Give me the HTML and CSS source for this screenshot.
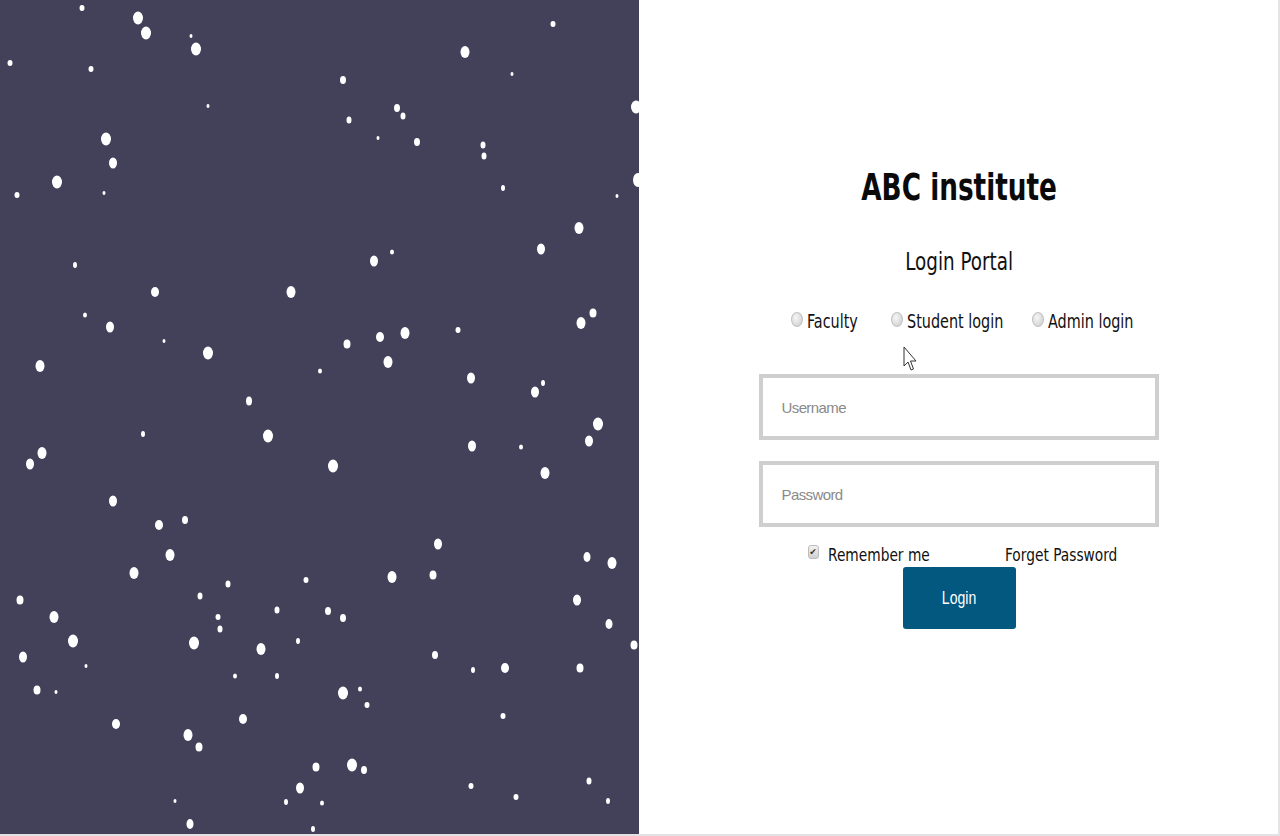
FILE: index.html
```html
<!DOCTYPE html>
<html>
<head>
<meta charset="utf-8">
<title>ABC institute - Login</title>
<link rel="stylesheet" href="styles.css">
</head>
<body>
<div class="page">
  <div class="snow-panel">
    <svg class="snow" viewBox="0 0 639 836" width="639" height="836" fill="#ffffff">
      <g class="big">
        <ellipse cx="138" cy="18" rx="5" ry="6.5"/><ellipse cx="146" cy="33" rx="5" ry="6.5"/><ellipse cx="196" cy="49" rx="5" ry="6.5"/>
        <ellipse cx="465" cy="52" rx="4.5" ry="6"/><ellipse cx="106" cy="139" rx="5" ry="6.5"/><ellipse cx="113" cy="163" rx="4" ry="5.5"/>
        <ellipse cx="57" cy="182" rx="5" ry="6.5"/><ellipse cx="636" cy="107" rx="5" ry="6.5"/><ellipse cx="638" cy="180" rx="5" ry="7"/>
        <ellipse cx="579" cy="228" rx="4.5" ry="6"/><ellipse cx="541" cy="249" rx="4" ry="5.5"/><ellipse cx="374" cy="261" rx="4" ry="5.5"/>
        <ellipse cx="291" cy="292" rx="4.5" ry="6"/><ellipse cx="155" cy="292" rx="4" ry="5"/><ellipse cx="110" cy="327" rx="4" ry="5.5"/>
        <ellipse cx="208" cy="353" rx="5" ry="6.5"/><ellipse cx="405" cy="333" rx="4.5" ry="6"/><ellipse cx="380" cy="337" rx="4" ry="5"/>
        <ellipse cx="388" cy="362" rx="4.5" ry="6"/><ellipse cx="347" cy="344" rx="3.5" ry="4.5"/><ellipse cx="581" cy="323" rx="4.5" ry="6"/>
        <ellipse cx="593" cy="313" rx="3.5" ry="4.5"/><ellipse cx="40" cy="366" rx="4.5" ry="6"/><ellipse cx="471" cy="378" rx="4" ry="5.5"/>
        <ellipse cx="535" cy="392" rx="4" ry="5.5"/><ellipse cx="598" cy="424" rx="5" ry="6.5"/><ellipse cx="589" cy="441" rx="4" ry="5.5"/>
        <ellipse cx="268" cy="436" rx="5" ry="6.5"/><ellipse cx="42" cy="453" rx="4.5" ry="6"/><ellipse cx="30" cy="464" rx="4" ry="5.5"/>
        <ellipse cx="333" cy="466" rx="5" ry="6.5"/><ellipse cx="472" cy="446" rx="4" ry="5.5"/><ellipse cx="545" cy="473" rx="4.5" ry="6"/>
        <ellipse cx="113" cy="501" rx="4" ry="5.5"/><ellipse cx="159" cy="525" rx="4" ry="5"/><ellipse cx="185" cy="520" rx="3" ry="4"/>
        <ellipse cx="438" cy="544" rx="4" ry="5.5"/><ellipse cx="170" cy="555" rx="4.5" ry="6"/><ellipse cx="134" cy="573" rx="4.5" ry="6"/>
        <ellipse cx="392" cy="577" rx="4.5" ry="6"/><ellipse cx="433" cy="575" rx="3.5" ry="4.5"/><ellipse cx="587" cy="557" rx="3.5" ry="5"/>
        <ellipse cx="612" cy="563" rx="4.5" ry="6"/><ellipse cx="577" cy="600" rx="4" ry="5.5"/><ellipse cx="54" cy="617" rx="4.5" ry="6"/>
        <ellipse cx="73" cy="641" rx="5" ry="6.5"/><ellipse cx="194" cy="643" rx="5" ry="6.5"/><ellipse cx="261" cy="649" rx="4.5" ry="6"/>
        <ellipse cx="20" cy="600" rx="3.5" ry="4.5"/><ellipse cx="609" cy="624" rx="3.5" ry="5"/><ellipse cx="634" cy="645" rx="3.5" ry="4.5"/>
        <ellipse cx="23" cy="657" rx="4" ry="5.5"/><ellipse cx="343" cy="693" rx="5" ry="6.5"/><ellipse cx="352" cy="765" rx="5" ry="6.5"/>
        <ellipse cx="188" cy="735" rx="4.5" ry="6"/><ellipse cx="199" cy="747" rx="3.5" ry="4.5"/><ellipse cx="190" cy="824" rx="3.5" ry="5"/>
        <ellipse cx="300" cy="788" rx="4" ry="5.5"/><ellipse cx="316" cy="767" rx="3.5" ry="4.5"/><ellipse cx="505" cy="668" rx="4" ry="5"/>
        <ellipse cx="116" cy="724" rx="4" ry="5"/><ellipse cx="243" cy="719" rx="4" ry="5"/><ellipse cx="37" cy="690" rx="3.5" ry="4.5"/>
        <ellipse cx="580" cy="668" rx="3.5" ry="4.5"/><ellipse cx="435" cy="655" rx="3" ry="4"/>
      </g>
      <g class="small">
        <ellipse cx="82" cy="8" rx="2.5" ry="3"/><ellipse cx="10" cy="63" rx="2.5" ry="3"/><ellipse cx="91" cy="69" rx="2.5" ry="3"/>
        <ellipse cx="343" cy="80" rx="3" ry="4"/><ellipse cx="349" cy="120" rx="2.5" ry="3.5"/><ellipse cx="397" cy="108" rx="3" ry="4"/>
        <ellipse cx="403" cy="116" rx="2.5" ry="3.5"/><ellipse cx="417" cy="142" rx="3" ry="4"/><ellipse cx="483" cy="145" rx="2.5" ry="3.5"/>
        <ellipse cx="484" cy="156" rx="2.5" ry="3.5"/><ellipse cx="503" cy="188" rx="2" ry="3"/><ellipse cx="75" cy="265" rx="2" ry="3"/>
        <ellipse cx="392" cy="252" rx="2" ry="2.5"/><ellipse cx="17" cy="195" rx="2.5" ry="3"/><ellipse cx="553" cy="24" rx="2.5" ry="3"/>
        <ellipse cx="143" cy="434" rx="2" ry="3"/><ellipse cx="249" cy="401" rx="3" ry="4.5"/><ellipse cx="458" cy="330" rx="2.5" ry="3"/>
        <ellipse cx="543" cy="383" rx="2" ry="3"/><ellipse cx="320" cy="371" rx="2" ry="2.5"/><ellipse cx="228" cy="584" rx="2.5" ry="3.5"/>
        <ellipse cx="200" cy="596" rx="2.5" ry="3.5"/><ellipse cx="277" cy="610" rx="2.5" ry="3.5"/><ellipse cx="306" cy="580" rx="2.5" ry="3"/>
        <ellipse cx="328" cy="611" rx="3" ry="4"/><ellipse cx="343" cy="618" rx="3" ry="4"/><ellipse cx="218" cy="617" rx="2.5" ry="3"/>
        <ellipse cx="220" cy="629" rx="2.5" ry="3.5"/><ellipse cx="235" cy="676" rx="2" ry="2.5"/><ellipse cx="277" cy="676" rx="2" ry="3"/>
        <ellipse cx="298" cy="641" rx="2" ry="3"/><ellipse cx="473" cy="670" rx="2" ry="3"/><ellipse cx="360" cy="689" rx="2" ry="2.5"/>
        <ellipse cx="367" cy="705" rx="2.5" ry="3"/><ellipse cx="503" cy="716" rx="2.5" ry="3"/><ellipse cx="471" cy="786" rx="2.5" ry="3"/>
        <ellipse cx="516" cy="797" rx="2.5" ry="3"/><ellipse cx="589" cy="781" rx="2.5" ry="3.5"/><ellipse cx="608" cy="801" rx="2" ry="3"/>
        <ellipse cx="286" cy="802" rx="2" ry="3"/><ellipse cx="364" cy="770" rx="3" ry="4"/><ellipse cx="313" cy="829" rx="2" ry="3"/>
        <ellipse cx="322" cy="803" rx="2" ry="2.5"/><ellipse cx="19" cy="601" rx="2" ry="3"/><ellipse cx="85" cy="315" rx="2" ry="2.5"/>
        <ellipse cx="164" cy="341" rx="1.5" ry="2"/><ellipse cx="521" cy="447" rx="2" ry="2.5"/><ellipse cx="104" cy="193" rx="1.5" ry="2"/>
        <ellipse cx="378" cy="138" rx="1.5" ry="2"/><ellipse cx="208" cy="106" rx="1.5" ry="2"/><ellipse cx="191" cy="36" rx="1.5" ry="2"/>
        <ellipse cx="512" cy="74" rx="1.5" ry="2"/><ellipse cx="617" cy="196" rx="1.5" ry="2"/><ellipse cx="175" cy="801" rx="1.5" ry="2"/>
        <ellipse cx="56" cy="692" rx="1.5" ry="2"/><ellipse cx="86" cy="666" rx="1.5" ry="2"/>
      </g>
    </svg>
  </div>

  <main class="login-panel">
    <div class="login-box">
      <h1 class="title">ABC institute</h1>
      <p class="subtitle">Login Portal</p>

      <div class="roles">
        <label class="role role-faculty"><input type="radio" name="role" class="radio"><span class="label-text">Faculty</span></label>
        <label class="role role-student"><input type="radio" name="role" class="radio"><span class="label-text">Student login</span></label>
        <label class="role role-admin"><input type="radio" name="role" class="radio"><span class="label-text">Admin login</span></label>
      </div>

      <input class="field field-user" type="text" placeholder="Username">
      <input class="field field-pass" type="password" placeholder="Password">

      <div class="options">
        <label class="remember"><span class="check" aria-hidden="true">&#10004;</span><span class="opt-text">Remember me</span></label>
        <a class="forgot" href="#"><span class="opt-text">Forget Password</span></a>
      </div>

      <button class="login-btn" type="button"><span class="btn-text">Login</span></button>
    </div>

    <svg class="cursor" width="14" height="27" viewBox="0 0 14 27">
      <path d="M1 1 L1 20 L5 16 L8 24 L10.5 23 L7.5 15 L13 15 Z" fill="#ffffff" stroke="#333" stroke-width="1" stroke-linejoin="round"/>
    </svg>
  </main>
</div>
</body>
</html>
```

FILE: styles.css
```css
* {
  box-sizing: border-box;
}

html, body {
  margin: 0;
  padding: 0;
  width: 1280px;
  height: 836px;
  overflow: hidden;
  background: #ffffff;
}

.page {
  display: flex;
  width: 1280px;
  height: 836px;
  border-bottom: 2px solid #e2e2e6;
}

.snow-panel {
  width: 639px;
  flex: none;
  background: #43415a;
  overflow: hidden;
}

.snow {
  display: block;
}

.login-panel {
  position: relative;
  flex: 1;
  background: #ffffff;
  border-right: 2px solid #e4e4e4;
  font-family: "DejaVu Sans Condensed", "DejaVu Sans", sans-serif;
  color: #111;
}

.login-box {
  display: flex;
  flex-direction: column;
  align-items: center;
  padding-top: 165px;
}

.title {
  margin: 0 0 0 2px;
  font-size: 38px;
  line-height: 44px;
  font-weight: bold;
  color: #0a0a0a;
  white-space: nowrap;
  transform: scaleX(0.77);
}

.subtitle {
  margin: 39px 0 0 2px;
  font-size: 25px;
  line-height: 28px;
  color: #111;
  white-space: nowrap;
  transform: scaleX(0.815);
}

.roles {
  display: flex;
  width: 342px;
  margin-top: 33px;
  margin-left: 7px;
  font-size: 20px;
  line-height: 24px;
}

.role {
  display: flex;
  align-items: center;
  gap: 4px;
  white-space: nowrap;
}

.role-faculty {
  width: 100px;
}

.role-student {
  width: 141px;
}

.role-admin {
  width: 101px;
}

.label-text {
  display: inline-block;
  transform: scaleX(0.8);
  transform-origin: left center;
}

.radio {
  appearance: none;
  -webkit-appearance: none;
  flex: none;
  width: 12px;
  height: 15px;
  margin: 0 0 3px 0;
  border-radius: 50%;
  border: 1px solid #c2c2c2;
  background: radial-gradient(ellipse at 40% 35%, #f6f6f6 0%, #dedede 55%, #c6c6c6 100%);
}

.field {
  display: block;
  width: 400px;
  height: 66px;
  border: 4px solid #cfcfcf;
  padding: 0 0 0 19px;
  font-family: "Liberation Sans", Arial, sans-serif;
  font-size: 15px;
  letter-spacing: -0.6px;
  color: #333;
  background: #fff;
  outline: none;
}

.field::placeholder {
  color: #8a8a8a;
}

.field-user {
  margin-top: 41px;
}

.field-pass {
  margin-top: 21px;
}

.options {
  display: flex;
  align-items: center;
  width: 307px;
  margin-top: 17px;
  margin-left: 5px;
  font-size: 18px;
  line-height: 22px;
}

.remember {
  display: flex;
  align-items: center;
  gap: 9px;
  width: 197px;
  white-space: nowrap;
}

.opt-text {
  display: inline-block;
  white-space: nowrap;
  transform: scaleX(0.85);
  transform-origin: left center;
}

.check {
  display: inline-flex;
  flex: none;
  align-items: center;
  justify-content: center;
  width: 11px;
  height: 14px;
  margin-bottom: 6px;
  border: 1px solid #bdbdbd;
  border-radius: 3px;
  background: linear-gradient(#f2f2f2, #d0d0d0);
  font-family: "DejaVu Sans", sans-serif;
  font-size: 9px;
  line-height: 1;
  color: #333;
}

.forgot {
  display: block;
  width: 110px;
  color: #111;
  text-decoration: none;
}

.login-btn {
  margin-top: 1px;
  margin-left: 1px;
  width: 113px;
  height: 62px;
  border: none;
  border-radius: 3px;
  background: #02587f;
  color: #ffffff;
  font-family: "Liberation Sans", Arial, sans-serif;
  font-size: 18px;
}

.btn-text {
  display: inline-block;
  transform: scaleX(0.78);
}

.cursor {
  position: absolute;
  left: 264px;
  top: 346px;
}
```
